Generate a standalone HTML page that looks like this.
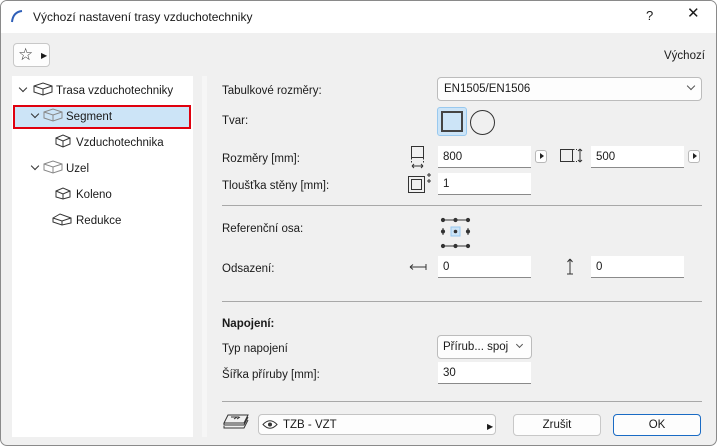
<!DOCTYPE html>
<html><head><meta charset="utf-8"><style>
*{box-sizing:border-box;margin:0;padding:0}
body{width:717px;height:446px;overflow:hidden;background:#fff;font-family:"Segoe UI","Liberation Sans",sans-serif;font-size:11.5px;line-height:16px;color:#1a1a1a;position:relative}
.win{position:absolute;left:0;top:0;width:717px;height:446px;border:1px solid #8a8a8a;border-radius:7px;background:#f0f0f0;overflow:hidden}
.title{position:absolute;left:0;top:0;width:717px;height:32px;background:#fff}
.a{position:absolute;white-space:nowrap}
.inp{position:absolute;background:#fff;border-bottom:1px solid #8a8a8a;height:22px;padding:3px 0 0 5px}
.btn{position:absolute;background:#fdfdfd;border:1px solid #c8c8c8;border-radius:4px;text-align:center}
.sm{position:absolute;width:12px;height:13px;border:1px solid #b8b8b8;border-radius:3px;background:#fff}
.sm:after{content:"";position:absolute;left:4px;top:2px;border-left:4px solid #222;border-top:3.5px solid transparent;border-bottom:3.5px solid transparent}
.hr{position:absolute;height:1px;background:#a8a8a8}
.chev{position:absolute;width:7px;height:7px;border-right:1px solid #555;border-bottom:1px solid #555;transform:rotate(45deg)}
.tc{position:absolute;width:6px;height:6px;border-right:1.5px solid #333;border-bottom:1.5px solid #333;transform:rotate(45deg)}
</style></head><body><div class="win">
<div class="title">
<svg class="a" style="left:9px;top:8px" width="14" height="14"><path d="M2 13 Q3 3 12 2" fill="none" stroke="#2f5fb8" stroke-width="2"/></svg>
<div class="a" style="left:32px;top:8px;font-size:12px">Výchozí nastavení trasy vzduchotechniky</div>
<div class="a" style="left:645px;top:7px;font-size:13px">?</div>
<div class="a" style="left:686px;top:5px;font-size:15px">✕</div>
</div>
<div class="btn" style="left:12px;top:42px;width:37px;height:24px;border-radius:4px">
<span class="a" style="left:4px;top:1px;font-size:17px;line-height:20px;color:#333">☆</span><span class="a" style="left:27px;top:4px;font-size:8px">▶</span></div>
<div class="a" style="left:663px;top:47px">Výchozí</div>
<div class="a" style="left:11px;top:75px;width:181px;height:361px;background:#fff"></div>
<div class="a" style="left:201px;top:75px;width:5px;height:361px;background:#f6f6f6"></div>
<div class="a" style="left:12px;top:104px;width:178px;height:24px;background:#cce4f7;border:2px solid #e0000e"></div>
<div class="tc" style="left:19px;top:84px"></div>
<div class="tc" style="left:31px;top:110px"></div>
<div class="tc" style="left:31px;top:162px"></div>
<svg class="a" style="left:32px;top:80px" width="20" height="16"><path d="M1 5 L10 2 L19 5 L19 11 L10 14 L1 11Z M1 5 L10 8 L19 5 M10 8 L10 14" fill="none" stroke="#333"/></svg>
<svg class="a" style="left:42px;top:106px" width="20" height="16"><path d="M1 5 L10 2 L19 5 L19 11 L10 14 L1 11Z M1 5 L10 8 L19 5 M10 8 L10 14" fill="none" stroke="#888"/></svg>
<svg class="a" style="left:53px;top:132px" width="18" height="16"><path d="M2 5 L9 2 L16 5 L16 11 L9 14 L2 11Z M2 5 L9 8 L16 5 M9 8 L9 14" fill="none" stroke="#333"/></svg>
<svg class="a" style="left:42px;top:158px" width="20" height="16"><path d="M1 5 L10 2 L19 5 L19 11 L10 14 L1 11Z M1 5 L10 8 L19 5 M10 8 L10 14" fill="none" stroke="#888"/></svg>
<svg class="a" style="left:53px;top:184px" width="18" height="16"><path d="M2 6 L9 3 L16 6 L16 12 L9 14 L2 12Z M2 6 L9 9 L16 6 M9 9 L9 14" fill="none" stroke="#333"/></svg>
<svg class="a" style="left:51px;top:210px" width="20" height="16"><path d="M1 7 L8 3 L19 7 L19 12 L10 14 L1 11Z M1 7 L10 10 L19 7 M10 10 L10 14" fill="none" stroke="#333"/></svg>
<div class="a" style="left:55px;top:82px">Trasa vzduchotechniky</div>
<div class="a" style="left:65px;top:108px">Segment</div>
<div class="a" style="left:75px;top:134px">Vzduchotechnika</div>
<div class="a" style="left:65px;top:160px">Uzel</div>
<div class="a" style="left:75px;top:186px">Koleno</div>
<div class="a" style="left:75px;top:212px">Redukce</div>

<div class="a" style="left:221px;top:82px">Tabulkové rozměry:</div>
<div class="btn" style="left:436px;top:76px;width:265px;height:24px;border-color:#bcbcbc;text-align:left;padding:3px 0 0 6px">EN1505/EN1506</div>
<div class="chev" style="left:687px;top:82px;width:6px;height:6px"></div>
<div class="a" style="left:221px;top:112px">Tvar:</div>
<div class="a" style="left:436px;top:106px;width:30px;height:29px;background:#cce4f7;border:1px solid #99c9ef;border-radius:3px"></div>
<div class="a" style="left:440px;top:110px;width:22px;height:21px;border:2px solid #444;background:#cce4f7"></div>
<div class="a" style="left:469px;top:109px;width:25px;height:25px;border:1.5px solid #333;border-radius:50%"></div>
<div class="a" style="left:221px;top:150px">Rozměry [mm]:</div>
<svg class="a" style="left:407px;top:144px" width="20" height="24"><rect x="3.5" y="1.5" width="12" height="11" fill="none" stroke="#333"/><path d="M3.5 13 V18 M15.5 13 V18" stroke="#333" stroke-dasharray="1.5 1.5"/><path d="M4 21 H15 M4 21 l2 -2 M4 21 l2 2 M15 21 l-2 -2 M15 21 l-2 2" fill="none" stroke="#333"/></svg>
<div class="inp" style="left:437px;top:145px;width:93px">800</div>
<div class="sm" style="left:534px;top:149px"></div>
<svg class="a" style="left:558px;top:145px" width="26" height="20"><rect x="1.5" y="3.5" width="12" height="12" fill="none" stroke="#333"/><path d="M14 3.5 H18 M14 15.5 H18" stroke="#333" stroke-dasharray="1.5 1.5"/><path d="M21 3 V16 M21 3 l-2 2 M21 3 l2 2 M21 16 l-2 -2 M21 16 l2 -2" fill="none" stroke="#333"/></svg>
<div class="inp" style="left:590px;top:145px;width:93px">500</div>
<div class="sm" style="left:687px;top:149px"></div>
<div class="a" style="left:221px;top:177px">Tloušťka stěny [mm]:</div>
<svg class="a" style="left:406px;top:170px" width="26" height="26"><rect x="1.5" y="5.5" width="16" height="16" fill="none" stroke="#333"/><rect x="4.5" y="8.5" width="10" height="10" fill="none" stroke="#333"/><path d="M22 2 V6 M20 4 H24 M22 8 V12 M20 10 H24" stroke="#333"/></svg>
<div class="inp" style="left:437px;top:172px;width:93px">1</div>
<div class="hr" style="left:221px;top:204px;width:480px"></div>
<div class="a" style="left:221px;top:220px">Referenční osa:</div>
<svg class="a" style="left:439px;top:215px" width="34" height="34"><rect x="11" y="11" width="9" height="9" fill="#cce4f7" stroke="#99c9ef"/>
<g stroke="#333" fill="#333"><path d="M3 4 H28 M3 30 H28 M3 12 V19 M28 12 V19"/>
<circle cx="3" cy="4" r="1.6"/><circle cx="15.5" cy="4" r="1.6"/><circle cx="28" cy="4" r="1.6"/><circle cx="3" cy="15.5" r="1.6"/><circle cx="15.5" cy="15.5" r="1.3"/><circle cx="28" cy="15.5" r="1.6"/><circle cx="3" cy="30" r="1.6"/><circle cx="15.5" cy="30" r="1.6"/><circle cx="28" cy="30" r="1.6"/></g></svg>
<div class="a" style="left:221px;top:260px">Odsazení:</div>
<svg class="a" style="left:407px;top:260px" width="22" height="12"><path d="M2 6 H18 M2 6 l3 -2.5 M2 6 l3 2.5 M18 3 V9" fill="none" stroke="#333"/></svg>
<div class="inp" style="left:437px;top:255px;width:93px">0</div>
<svg class="a" style="left:563px;top:256px" width="12" height="20"><path d="M6 2 V17 M6 2 l-2.5 3 M6 2 l2.5 3 M3 17 H9" fill="none" stroke="#333"/></svg>
<div class="inp" style="left:590px;top:255px;width:93px">0</div>
<div class="hr" style="left:221px;top:300px;width:480px"></div>
<div class="a" style="left:221px;top:315px;font-weight:bold">Napojení:</div>
<div class="a" style="left:221px;top:340px">Typ napojení</div>
<div class="btn" style="left:436px;top:334px;width:95px;height:24px;border-color:#bcbcbc;text-align:left;padding:3px 0 0 5px">Přírub... spoj</div>
<div class="chev" style="left:516px;top:341px;width:5px;height:5px"></div>
<div class="a" style="left:221px;top:366px">Šířka příruby [mm]:</div>
<div class="inp" style="left:437px;top:361px;width:93px">30</div>
<div class="hr" style="left:221px;top:400px;width:480px"></div>
<svg class="a" style="left:221px;top:412px" width="28" height="18"><path d="M6 2 H26 L22 10 H2Z M2 10 V12 L22 12 L26 4 M2 13 V15 H22 L26 7" fill="none" stroke="#333"/><path d="M9 4 H17 M12 6 L15 4 M15 6 L18 4" stroke="#333"/></svg>
<div class="btn" style="left:257px;top:413px;width:238px;height:21px;padding:2px 0 0 24px;text-align:left;border-color:#c4c4c4">TZB - VZT</div>
<svg class="a" style="left:261px;top:418px" width="16" height="11"><path d="M1 5.5 Q8 -2 15 5.5 Q8 13 1 5.5Z" fill="none" stroke="#333"/><circle cx="8" cy="5.5" r="2" fill="#333"/></svg>
<div class="a" style="left:486px;top:418px;font-size:8px">▶</div>
<div class="btn" style="left:512px;top:413px;width:88px;height:22px;padding-top:2px">Zrušit</div>
<div class="btn" style="left:612px;top:413px;width:88px;height:22px;padding-top:2px;border-color:#1a6bc4">OK</div>
</div></body></html>
